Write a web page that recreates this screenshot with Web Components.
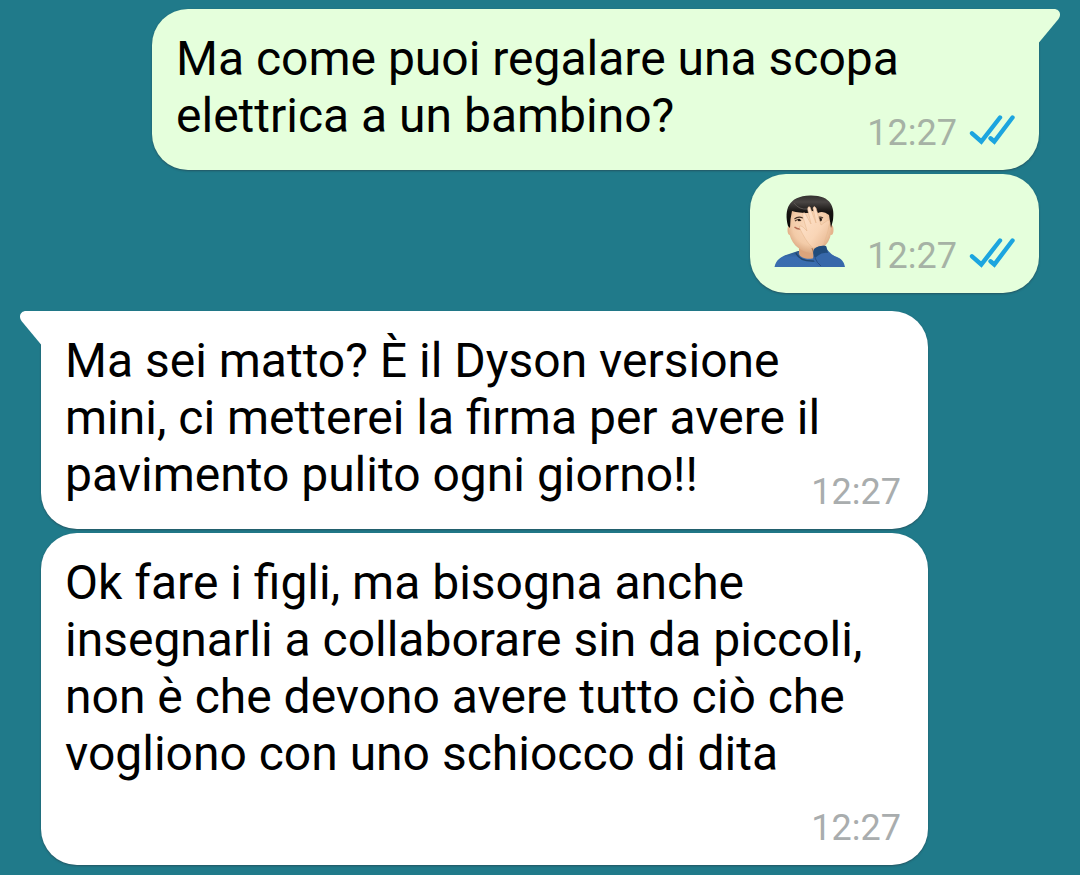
<!DOCTYPE html>
<html lang="it">
<head>
<meta charset="utf-8">
<meta name="viewport" content="width=device-width, initial-scale=1">
<title>Chat</title>
<style>
  html { background: #207a8a; }
  body { margin: 0; font-family: Roboto, "Noto Sans", sans-serif; }
</style>
</head>
<body>
<chat-thread>
  <chat-bubble sent tail time="12:27">Ma come puoi regalare una scopa elettrica a un bambino?</chat-bubble>
  <chat-bubble sent short time="12:27"><emoji-facepalm></emoji-facepalm></chat-bubble>
  <chat-bubble tail turn time="12:27">Ma sei matto? È il Dyson versione mini, ci metterei la firma per avere il pavimento pulito ogni giorno!!</chat-bubble>
  <chat-bubble below time="12:27">Ok fare i figli, ma bisogna anche insegnarli a collaborare sin da piccoli, non è che devono avere tutto ciò che vogliono con uno schiocco di dita</chat-bubble>
</chat-thread>

<template id="thread-template">
  <style>
    :host { display: block; }
    main { display: flex; flex-direction: column; gap: 4px; padding: 9px 41px 10px; }
  </style>
  <main><slot></slot></main>
</template>

<template id="bubble-template">
  <style>
    :host {
      --fill: #ffffff;
      --time: #a9adae;
      display: block;
      position: relative;
      box-sizing: border-box;
      width: calc(100% - 111px);
      align-self: flex-start;
      color: #000;
    }
    :host([sent]) { --fill: #e5ffdc; --time: #a6b2a5; align-self: flex-end; }
    :host([turn]) { margin-top: 14px; }
    :host([short]) { width: auto; }
    article {
      display: grid;
      padding: 21px 27px 16px 24px;
      border-radius: 36px;
      background: var(--fill);
      box-shadow: 0 1px 2px rgba(40, 50, 60, 0.5);
    }
    :host([tail]) article { border-top-left-radius: 0; }
    :host([tail][sent]) article { border-radius: 36px 0 36px 36px; }
    .text {
      grid-area: 1 / 1;
      margin: 0;
      padding: 0 22px 10px 0;
      font-size: 48px;
      line-height: 57px;
    }
    :host([below]) .text { padding-bottom: 67px; }
    .meta {
      grid-area: 1 / 1;
      place-self: end;
      display: flex;
      align-items: center;
      gap: 12px;
      color: var(--time);
      font-size: 36px;
      line-height: 42px;
    }
    :host([sent]) article { padding-right: 24px; }
    :host([short]) article { grid-template-columns: auto auto; column-gap: 21px; }
    :host([short]) .text { padding-right: 0; }
    :host([short]) .meta { grid-area: 1 / 2; }
    .ticks, .tail { display: none; }
    :host([sent]) .ticks { display: block; }
    :host([tail]) .tail { display: block; position: absolute; top: 0; right: 100%; fill: var(--fill); }
    :host([tail][sent]) .tail { right: auto; left: 100%; transform: scaleX(-1); }
  </style>
  <article>
    <svg class="tail" width="21" height="34" viewBox="0 0 21 34" aria-hidden="true"><path d="M21 0H6C1 0-2 5 1.500 10L21 33.500Z"/></svg>
    <p class="text"><slot></slot></p>
    <div class="meta"><time></time>
      <svg class="ticks" width="46" height="36" viewBox="0 0 46 36" role="img" aria-label="Letto" fill="none" stroke="#1ca5df" stroke-width="4.400" stroke-linecap="round" stroke-linejoin="miter"><path d="M3 18.300 12.300 26.500 31 2.500M21.500 23.300 25.300 26.500 43.500 2.500"/></svg>
    </div>
  </article>
</template>

<template id="facepalm-template">
  <style>
    :host { display: block; }
    svg { display: block; }
  </style>
  <svg width="72" height="72" viewBox="10 9 72 72" role="img" aria-label="Uomo che si copre il volto">
    <defs>
      <linearGradient id="hair" x1="0" y1="0" x2="0" y2="1"><stop offset="0" stop-color="#33302e"/><stop offset=".2" stop-color="#4a4644"/><stop offset=".5" stop-color="#171412"/><stop offset="1" stop-color="#080706"/></linearGradient>
      <radialGradient id="skin" cx=".5" cy=".4" r=".6"><stop offset="0" stop-color="#fbdcc1"/><stop offset=".7" stop-color="#f3cba8"/><stop offset="1" stop-color="#dba982"/></radialGradient>
      <linearGradient id="hand" x1="0" y1="0" x2="1" y2="1"><stop offset="0" stop-color="#ffe5d0"/><stop offset=".6" stop-color="#f9d5b6"/><stop offset="1" stop-color="#e4b28b"/></linearGradient>
      <linearGradient id="shirt" x1="0" y1="0" x2="0" y2="1"><stop offset="0" stop-color="#285584"/><stop offset=".4" stop-color="#396db1"/><stop offset="1" stop-color="#3a6dae"/></linearGradient>
    </defs>
    <path d="M10.500 81C12 74 17 70 25 68L34 65H58L70 70C77 72 80 75 81 81Z" fill="url(#shirt)"/>
    <path d="M35 57V66C33 73 51 76 55 68V57Z" fill="#dba47c"/>
    <path d="M32 67Q36 76 51 75" fill="none" stroke="#21466f" stroke-width="1.500"/>
    <ellipse cx="26" cy="44" rx="2.500" ry="5" fill="#e6b38c"/><ellipse cx="67" cy="44" rx="2.500" ry="5" fill="#e6b38c"/>
    <path d="M25 25Q29 20 46 20T67 26V45C67 57 57 66 46 67C34 65 26 56 25 45Z" fill="url(#skin)"/>
    <path d="M24 40C20 24 24 10 46 9.500C67 9 71 21 69 34L67 42L65 29Q59 24 54 27Q47 23 45 27Q35 27 28 25Q26 33 26 42Z" fill="url(#hair)"/>
    <path d="M30 17Q35 24 44 23" fill="none" stroke="#5b5551" stroke-width="1"/>
    <path d="M30.500 33Q34 30 39 32M31 35Q35 32 37 35M53 32Q56 30 59 32" fill="none" stroke="#443025" stroke-width="1.200"/>
    <circle cx="35" cy="34" r="1.300" fill="#221812"/><circle cx="56" cy="33.500" r="2" fill="#221812"/>
    <path d="M30.500 41Q34 44 38 42.500" fill="none" stroke="#b66b52" stroke-width="1.500"/>
    <path d="M49 62C43 57 39 49 36 43Q34 38 39 41L43 45L39 31Q38 26 41 27L47 38L44 25Q43 20 46 21L52 37L49 22Q50 19 52 22L57 39L64 34Q67 35 65 40C64 48 60 55 59 61Z" fill="url(#hand)" stroke="#e6b891" stroke-width=".6" stroke-linejoin="round"/>
    <path d="M48 62Q49 68 53 72" fill="none" stroke="#a87658"/>
    <path d="M50 64Q55 59 62 60Q63 67 76 73Q79 76 80 81H57Q51 78 49 73Z" fill="#3768aa"/>
    <path d="M50 63Q55 59 62 60L64 67Q57 66 51 72Q48 67 50 63Z" fill="#214c7c"/>
    <path d="M51 72Q53 77 57 80" fill="none" stroke="#254e84"/>
  </svg>
</template>

<script>
  const stamp = (host, id) => {
    const root = host.attachShadow({ mode: "open" });
    root.append(document.getElementById(id).content.cloneNode(true));
    return root;
  };
  customElements.define("chat-thread", class extends HTMLElement {
    constructor() { super(); stamp(this, "thread-template"); }
  });
  customElements.define("chat-bubble", class extends HTMLElement {
    constructor() { super(); stamp(this, "bubble-template"); }
    connectedCallback() {
      this.shadowRoot.querySelector("time").textContent = this.getAttribute("time");
    }
  });
  customElements.define("emoji-facepalm", class extends HTMLElement {
    constructor() { super(); stamp(this, "facepalm-template"); }
  });
</script>
</body>
</html>
